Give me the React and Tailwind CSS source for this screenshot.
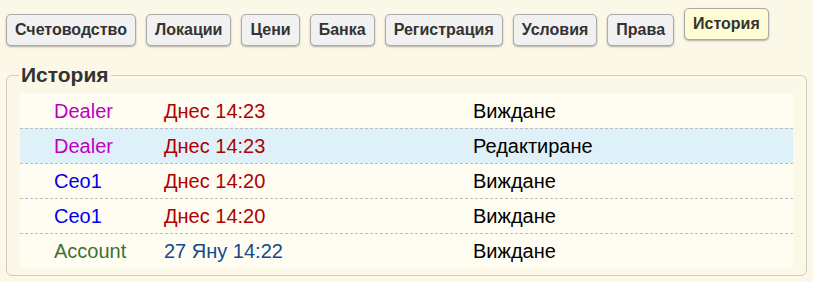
import React from 'react';

const tabs = ['Счетоводство', 'Локации', 'Цени', 'Банка', 'Регистрация', 'Условия', 'Права', 'История'];

const rows = [
  { user: 'Dealer', userColor: 'text-[#c000c0]', when: 'Днес 14:23', whenColor: 'text-[#b00000]', action: 'Виждане' },
  { user: 'Dealer', userColor: 'text-[#c000c0]', when: 'Днес 14:23', whenColor: 'text-[#b00000]', action: 'Редактиране', hl: true },
  { user: 'Ceo1', userColor: 'text-[#0000ee]', when: 'Днес 14:20', whenColor: 'text-[#b00000]', action: 'Виждане' },
  { user: 'Ceo1', userColor: 'text-[#0000ee]', when: 'Днес 14:20', whenColor: 'text-[#b00000]', action: 'Виждане' },
  { user: 'Account', userColor: 'text-[#3f7034]', when: '27 Яну 14:22', whenColor: 'text-[#134a8c]', action: 'Виждане' },
];

export default function App() {
  return (
    <div className="min-h-[282px] bg-[#fcf8e7] px-[6px] pt-[8px] font-['Liberation_Sans',Arial,sans-serif]">
      {/* Tabs */}
      <div className="flex items-start gap-[10px]">
        {tabs.map((t) => {
          const active = t === 'История';
          return (
            <button
              key={t}
              className={`h-[32px] px-[8px] rounded-[5px] border border-[#aaa] text-[16px] font-bold text-[#333] shadow-[0_1px_2px_rgba(0,0,0,0.3)] ${
                active ? 'bg-[#fffbd2] mt-0' : 'bg-[#f1f1f1] mt-[6px]'
              }`}
            >
              {t}
            </button>
          );
        })}
      </div>

      {/* History */}
      <fieldset className="mt-[16px] w-[801px] rounded-[6px] border border-[#cfcbbd] px-[13px] pb-[7px]">
        <legend className="px-[2px] -ml-[1px] text-[21px] font-bold leading-[26px] text-[#333]">История</legend>
        <div className="mt-[5px] bg-[#fffdf2] text-[20px]">
          {rows.map((r, i) => (
            <div
              key={i}
              className={`flex items-center h-[35px] pl-[34px] ${i > 0 ? 'border-t border-dashed border-[#bbb]' : ''} ${
                r.hl ? 'bg-[#def1f9]' : ''
              }`}
            >
              <span className={`w-[110px] ${r.userColor}`}>{r.user}</span>
              <span className={`w-[309px] ${r.whenColor}`}>{r.when}</span>
              <span className="text-black">{r.action}</span>
            </div>
          ))}
        </div>
      </fieldset>
    </div>
  );
}
